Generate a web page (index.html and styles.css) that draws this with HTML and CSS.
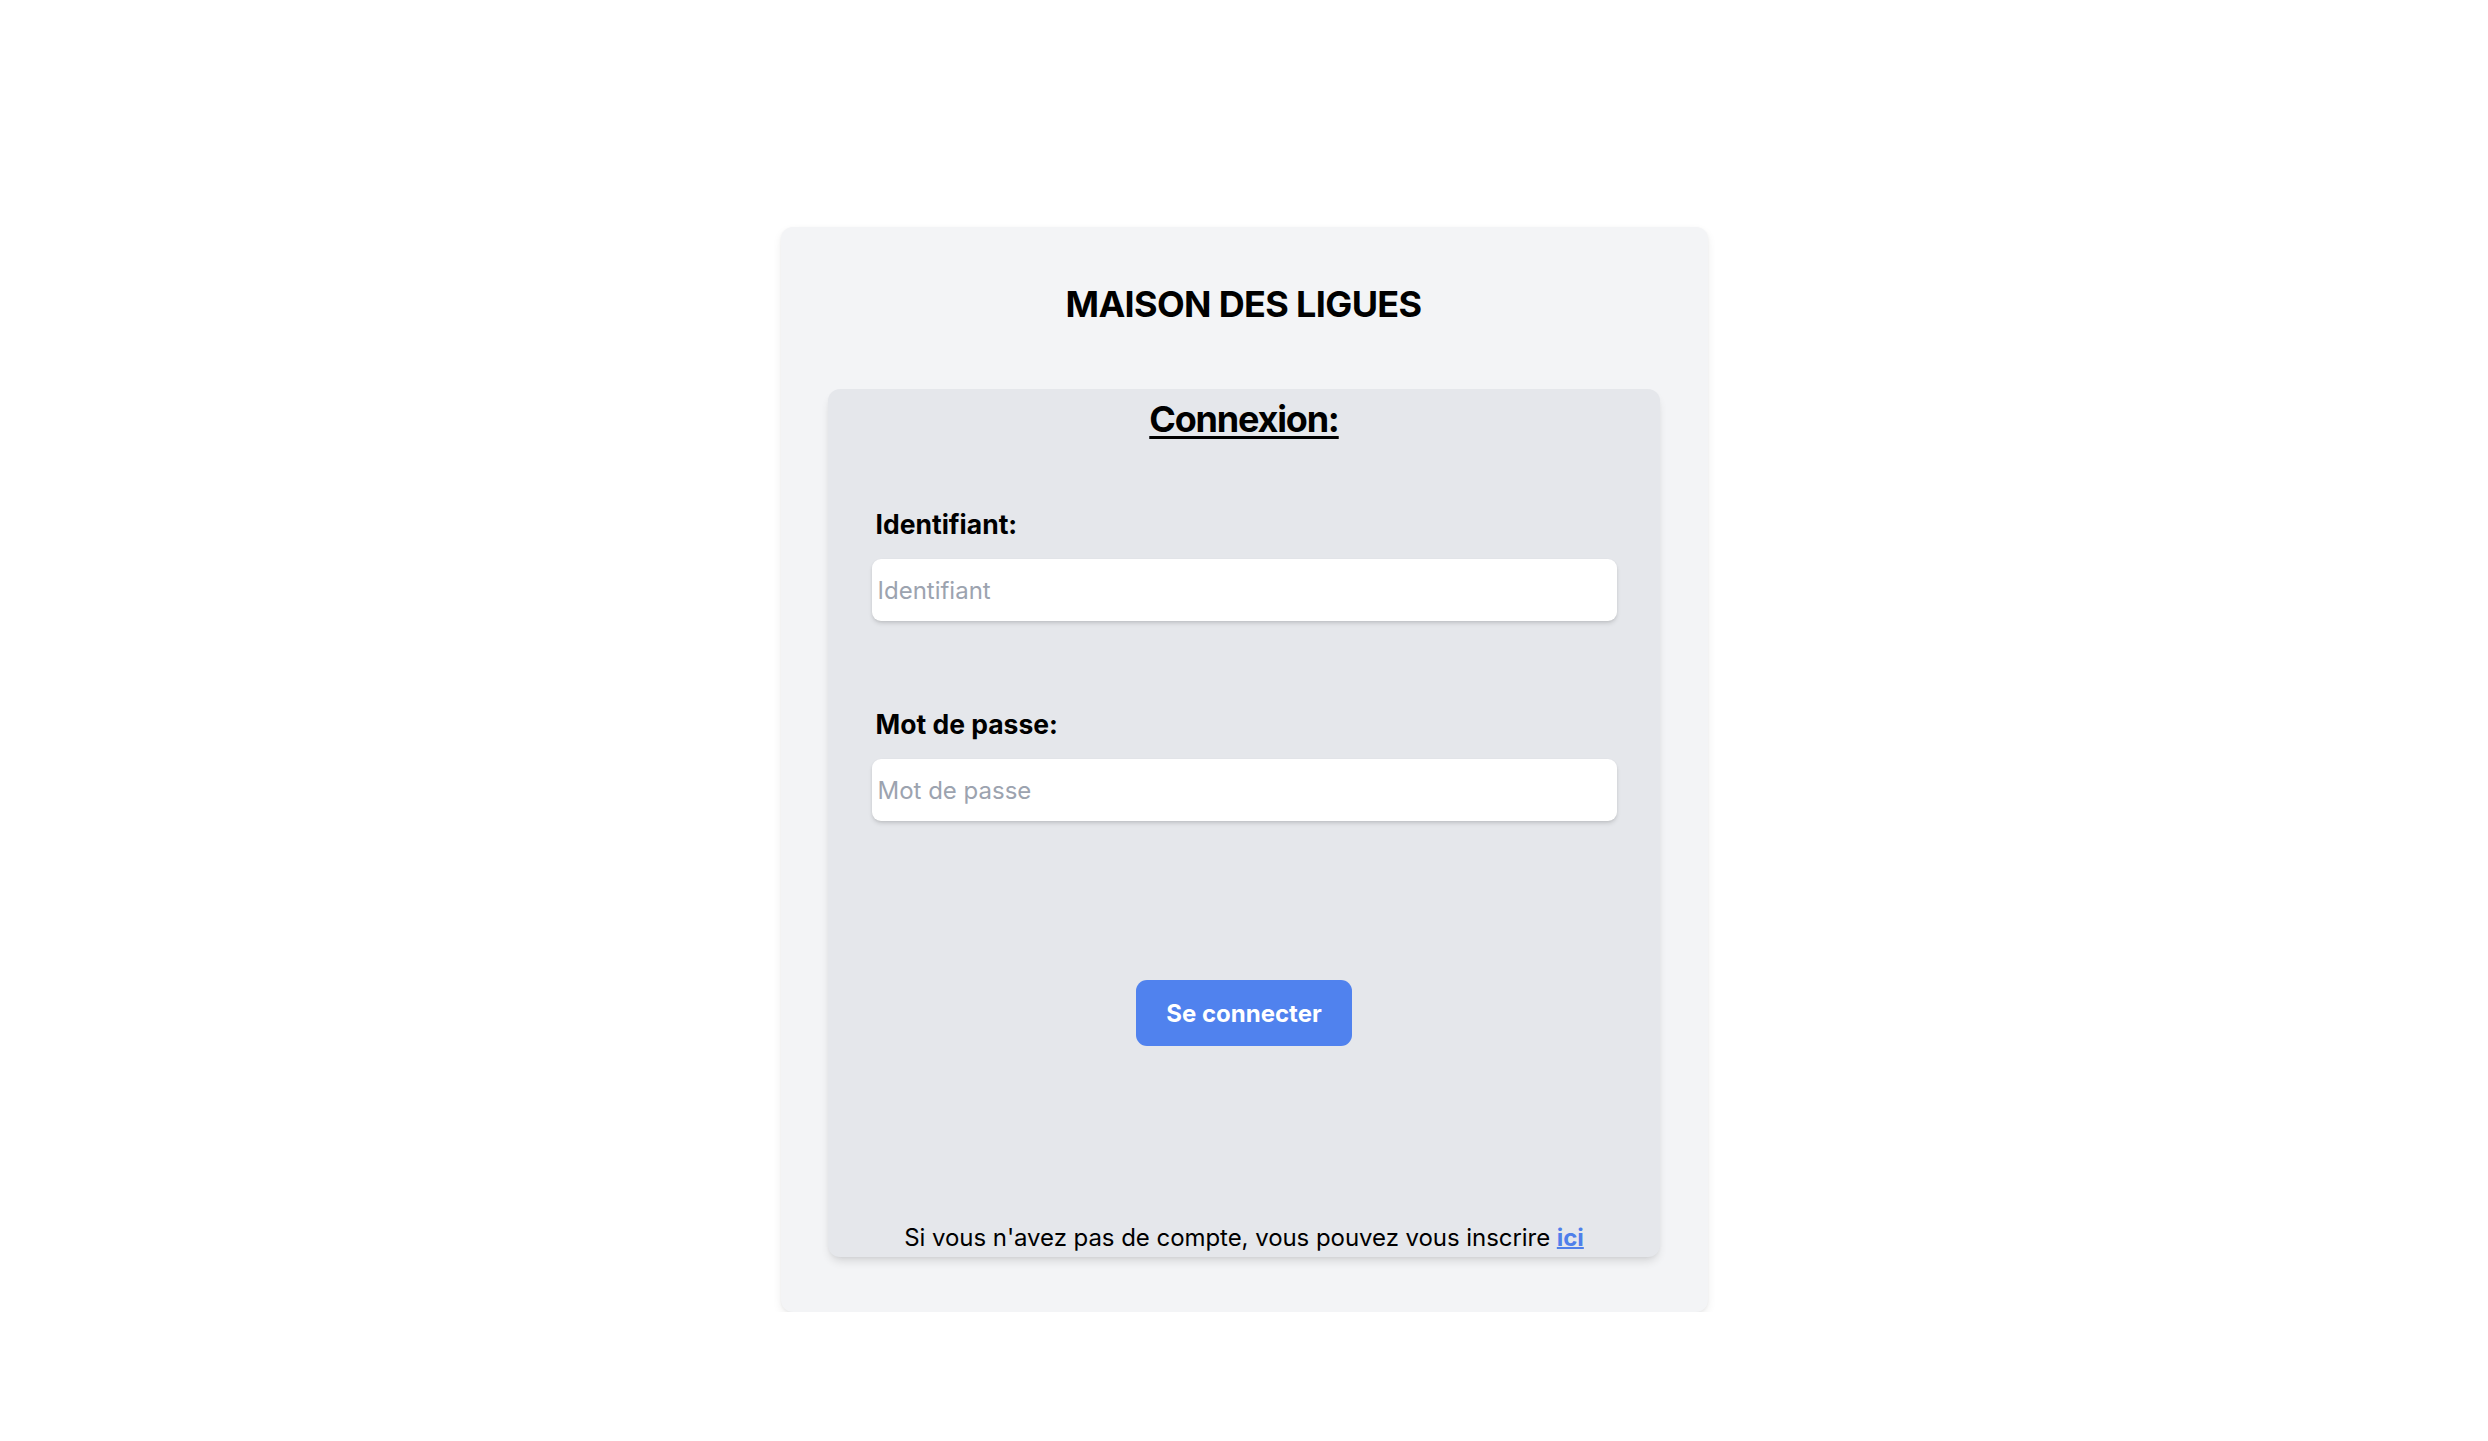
FILE: index.html
```html
<!DOCTYPE html>
<html lang="fr">
<head>
<meta charset="utf-8">
<title>Maison des Ligues - Connexion</title>
<link rel="stylesheet" href="styles.css">
</head>
<body>
<main class="page">
  <section class="outer-card">
    <h1 class="site-title">MAISON DES LIGUES</h1>
    <form class="login-card">
      <h2 class="login-title">Connexion:</h2>
      <div class="field field-first">
        <label class="field-label" for="ident">Identifiant:</label>
        <input class="field-input" id="ident" type="text" placeholder="Identifiant">
      </div>
      <div class="field field-second">
        <label class="field-label" for="pwd">Mot de passe:</label>
        <input class="field-input" id="pwd" type="password" placeholder="Mot de passe">
      </div>
      <div class="actions">
        <button class="submit-btn" type="button">Se connecter</button>
      </div>
      <p class="signup">Si vous n'avez pas de compte, vous pouvez vous inscrire <a class="signup-link" href="#">ici</a></p>
    </form>
  </section>
</main>
</body>
</html>
```

FILE: styles.css
```css
* {
  box-sizing: border-box;
}

html, body {
  margin: 0;
  padding: 0;
  background: #ffffff;
}

body {
  font-family: Inter, "Noto Sans", "Liberation Sans", sans-serif;
  color: #000000;
}

.page {
  display: flex;
  justify-content: center;
  padding-top: 227px;
}

.outer-card {
  width: 927px;
  height: 1085px;
  background: #f3f4f6;
  border-radius: 12px;
  box-shadow: 0 4px 10px rgba(0, 0, 0, 0.07), 0 1px 3px rgba(0, 0, 0, 0.05);
  padding: 53px 48px 55px 47px;
  display: flex;
  flex-direction: column;
}

.site-title {
  margin: 0 0 61px 0;
  font-size: 36px;
  line-height: 48px;
  font-weight: 700;
  text-align: center;
  letter-spacing: -0.65px;
}

.login-card {
  flex: 1;
  background: #e5e7eb;
  border-radius: 12px;
  box-shadow: 0 6px 10px -2px rgba(0, 0, 0, 0.12), 0 2px 4px -2px rgba(0, 0, 0, 0.08);
  padding: 6px 43px 1px 44px;
  display: flex;
  flex-direction: column;
  margin: 0;
}

.login-title {
  margin: 0;
  font-size: 36px;
  line-height: 48px;
  font-weight: 700;
  text-align: center;
  letter-spacing: -1.2px;
  text-decoration: underline;
  text-decoration-thickness: 3px;
  text-underline-offset: 4px;
}

.field {
  display: flex;
  flex-direction: column;
}

.field-first {
  margin-top: 63px;
}

.field-second {
  margin-top: 85px;
}

.field-label {
  font-size: 26.5px;
  line-height: 36px;
  font-weight: 700;
  padding-left: 4px;
  margin-bottom: 17px;
}

.field-input {
  height: 62px;
  width: 100%;
  border: none;
  border-radius: 9px;
  background: #ffffff;
  box-shadow: 0 3px 5px -1px rgba(0, 0, 0, 0.14), 0 1px 3px rgba(0, 0, 0, 0.06);
  padding: 0 6px;
  font-family: Inter, "Noto Sans", "Liberation Sans", sans-serif;
  font-size: 24px;
  color: #111827;
  outline: none;
}

.field-input::placeholder {
  color: #9ca3af;
}

.actions {
  display: flex;
  justify-content: center;
  margin-top: 159px;
}

.submit-btn {
  height: 66px;
  padding: 0 30px;
  border: none;
  border-radius: 11px;
  background: #5082ee;
  color: #ffffff;
  font-family: Inter, "Noto Sans", "Liberation Sans", sans-serif;
  font-size: 24px;
  font-weight: 700;
  cursor: pointer;
}

.signup {
  margin: 174px 0 0 0;
  font-size: 24px;
  line-height: 36px;
  text-align: center;
  letter-spacing: -0.05px;
}

.signup-link {
  color: #4f7fea;
  font-weight: 700;
  text-decoration: underline;
  text-decoration-thickness: 2px;
}
```
